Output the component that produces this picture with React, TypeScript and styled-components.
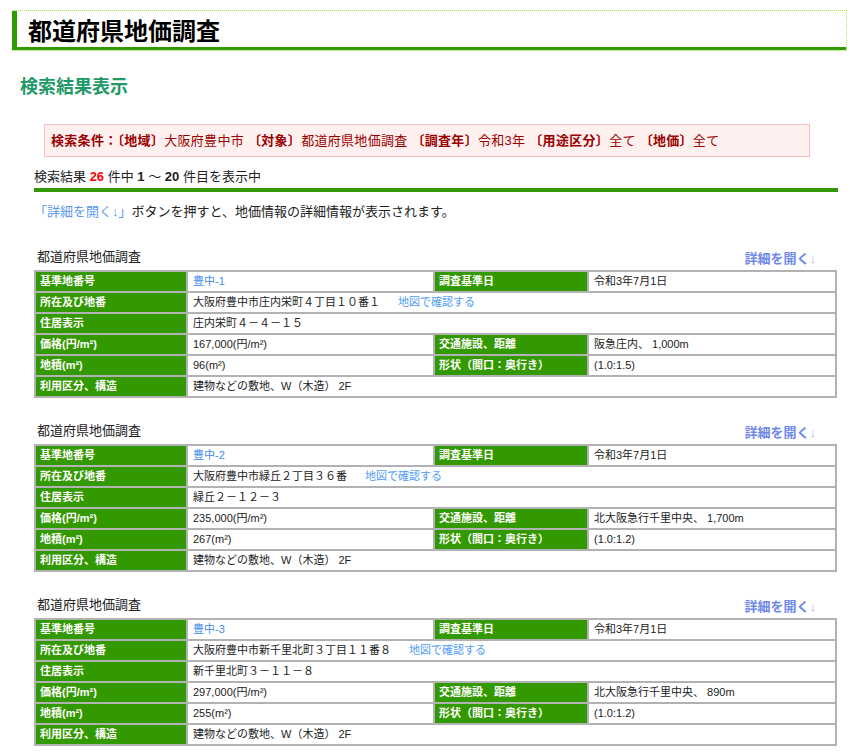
import React from 'react';
import styled, { createGlobalStyle } from 'styled-components';

const GlobalStyle = createGlobalStyle`
  body {
    margin: 0;
    background: #fff;
    color: #222;
    font-family: "Liberation Sans", "Noto Sans CJK JP", sans-serif;
  }
`

const Page = styled.div`
  width: 850px;
  padding-bottom: 30px;
`

const HeaderFrame = styled.div`
  margin: 10px 3px 0 12px;
  border-top: 1px dotted #99ee44;
  border-right: 1px dotted #99ee44;
  border-bottom: 1px solid #c4f29a;
`

const Title = styled.h1`
  margin: 0;
  height: 36px;
  border-left: 5px solid #339900;
  border-bottom: 3px solid #339900;
  padding-left: 11px;
  font-family: "Noto Sans CJK JP", sans-serif;
  font-size: 24px;
  font-weight: 700;
  line-height: 37px;
  color: #000;
`

const Subtitle = styled.h2`
  margin: 22px 0 0 20px;
  font-family: "Noto Sans CJK JP", sans-serif;
  font-size: 18px;
  font-weight: 700;
  line-height: 24px;
  color: #1f9966;
`

const Main = styled.div`
  padding: 0 12px 0 34px;
`

const Condition = styled.div`
  margin: 27px 0 0 10px;
  width: 766px;
  height: 33px;
  box-sizing: border-box;
  border: 1px solid #ffbcbc;
  background: #fff0f0;
  padding-left: 6px;
  font-size: 13px;
  letter-spacing: 0.3px;
  line-height: 31px;
  color: #990000;
  white-space: nowrap;

  b {
    font-weight: 700;
  }
`

const ResultLine = styled.div`
  margin-top: 11px;
  font-size: 13px;
  line-height: 18px;
  color: #222;

  b {
    font-weight: 700;
  }
`

const Count = styled.b`
  color: #ff0000;
`

const Rule = styled.div`
  margin-top: 2px;
  height: 4px;
  background: #339900;
`

const Info = styled.p`
  margin: 11px 0 0;
  font-size: 13px;
  line-height: 18px;
  color: #222;
`

const InfoLink = styled.span`
  color: #5b98ec;
`

const Block = styled.section<{ first?: boolean }>`
  margin-top: ${p => (p.first ? '25px' : '22px')};
`

const BlockHead = styled.div`
  height: 24px;
  display: flex;
  justify-content: space-between;
  align-items: flex-end;
  padding: 0 22px 0 3px;
`

const BlockTitle = styled.div`
  margin-bottom: 4px;
  font-size: 13px;
  line-height: 18px;
  color: #222;
`

const DetailLink = styled.a`
  margin-bottom: 2px;
  font-size: 13px;
  font-weight: 700;
  line-height: 18px;
  color: #7088ea;
  text-decoration: none;
`

const Arrow = styled.span`
  font-weight: 400;
  color: #a8b4f0;
`

const Table = styled.table`
  width: 803px;
  table-layout: fixed;
  border-collapse: separate;
  border-spacing: 0;
  border-top: 2px solid #b2b2b2;
  border-left: 2px solid #b2b2b2;
  font-size: 11px;
`

const Label = styled.th`
  height: 19px;
  padding: 0 0 0 4px;
  box-sizing: border-box;
  background: #339900;
  color: #fff;
  font-weight: 700;
  text-align: left;
  border-right: 2px solid #b2b2b2;
  border-bottom: 2px solid #b2b2b2;
  white-space: nowrap;
  line-height: 19px;
`

const Cell = styled.td`
  height: 19px;
  padding: 0 0 0 5px;
  box-sizing: border-box;
  background: #fff;
  color: #222;
  border-right: 2px solid #b2b2b2;
  border-bottom: 2px solid #b2b2b2;
  white-space: nowrap;
  line-height: 19px;
`

const CodeLink = styled.span`
  color: #3f8cef;
`

const MapLink = styled.span`
  margin-left: 18px;
  color: #4f9cf3;
`

interface Entry {
  code: string
  address: string
  residence: string
  price: string
  station: string
  area: string
  shape: string
}

const entries: Entry[] = [
  {
    code: '豊中-1',
    address: '大阪府豊中市庄内栄町４丁目１０番１',
    residence: '庄内栄町４－４－１５',
    price: '167,000(円/m²)',
    station: '阪急庄内、 1,000m',
    area: '96(m²)',
    shape: '(1.0:1.5)',
  },
  {
    code: '豊中-2',
    address: '大阪府豊中市緑丘２丁目３６番',
    residence: '緑丘２－１２－３',
    price: '235,000(円/m²)',
    station: '北大阪急行千里中央、 1,700m',
    area: '267(m²)',
    shape: '(1.0:1.2)',
  },
  {
    code: '豊中-3',
    address: '大阪府豊中市新千里北町３丁目１１番８',
    residence: '新千里北町３－１１－８',
    price: '297,000(円/m²)',
    station: '北大阪急行千里中央、 890m',
    area: '255(m²)',
    shape: '(1.0:1.2)',
  },
]

const ResultBlock = ({ data, first }: { data: Entry; first?: boolean }) => {
  return (
    <Block first={first}>
      <BlockHead>
        <BlockTitle>都道府県地価調査</BlockTitle>
        <DetailLink href="#">詳細を開く<Arrow>↓</Arrow></DetailLink>
      </BlockHead>
      <Table>
        <colgroup>
          <col style={{ width: 152 }} />
          <col style={{ width: 247 }} />
          <col style={{ width: 154 }} />
          <col style={{ width: 248 }} />
        </colgroup>
        <tbody>
          <tr>
            <Label>基準地番号</Label>
            <Cell><CodeLink>{data.code}</CodeLink></Cell>
            <Label>調査基準日</Label>
            <Cell>令和3年7月1日</Cell>
          </tr>
          <tr>
            <Label>所在及び地番</Label>
            <Cell colSpan={3}>{data.address}<MapLink>地図で確認する</MapLink></Cell>
          </tr>
          <tr>
            <Label>住居表示</Label>
            <Cell colSpan={3}>{data.residence}</Cell>
          </tr>
          <tr>
            <Label>価格(円/m²)</Label>
            <Cell>{data.price}</Cell>
            <Label>交通施設、距離</Label>
            <Cell>{data.station}</Cell>
          </tr>
          <tr>
            <Label>地積(m²)</Label>
            <Cell>{data.area}</Cell>
            <Label>形状（間口：奥行き）</Label>
            <Cell>{data.shape}</Cell>
          </tr>
          <tr>
            <Label>利用区分、構造</Label>
            <Cell colSpan={3}>建物などの敷地、W（木造） 2F</Cell>
          </tr>
        </tbody>
      </Table>
    </Block>
  )
}

export default function App() {
  return (
    <Page>
      <GlobalStyle />
      <HeaderFrame>
        <Title>都道府県地価調査</Title>
      </HeaderFrame>
      <Subtitle>検索結果表示</Subtitle>
      <Main>
        <Condition>
          <b>検索条件：</b><b>〔地域〕</b>大阪府豊中市 <b>〔対象〕</b>都道府県地価調査 <b>〔調査年〕</b>令和3年 <b>〔用途区分〕</b>全て <b>〔地価〕</b>全て
        </Condition>
        <ResultLine>
          検索結果 <Count>26</Count> 件中 <b>1</b> ～ <b>20</b> 件目を表示中
        </ResultLine>
        <Rule />
        <Info>
          <InfoLink>「詳細を開く↓」</InfoLink>ボタンを押すと、地価情報の詳細情報が表示されます。
        </Info>
        {entries.map((e, i) => (
          <ResultBlock data={e} first={i === 0} key={i} />
        ))}
      </Main>
    </Page>
  )
}
